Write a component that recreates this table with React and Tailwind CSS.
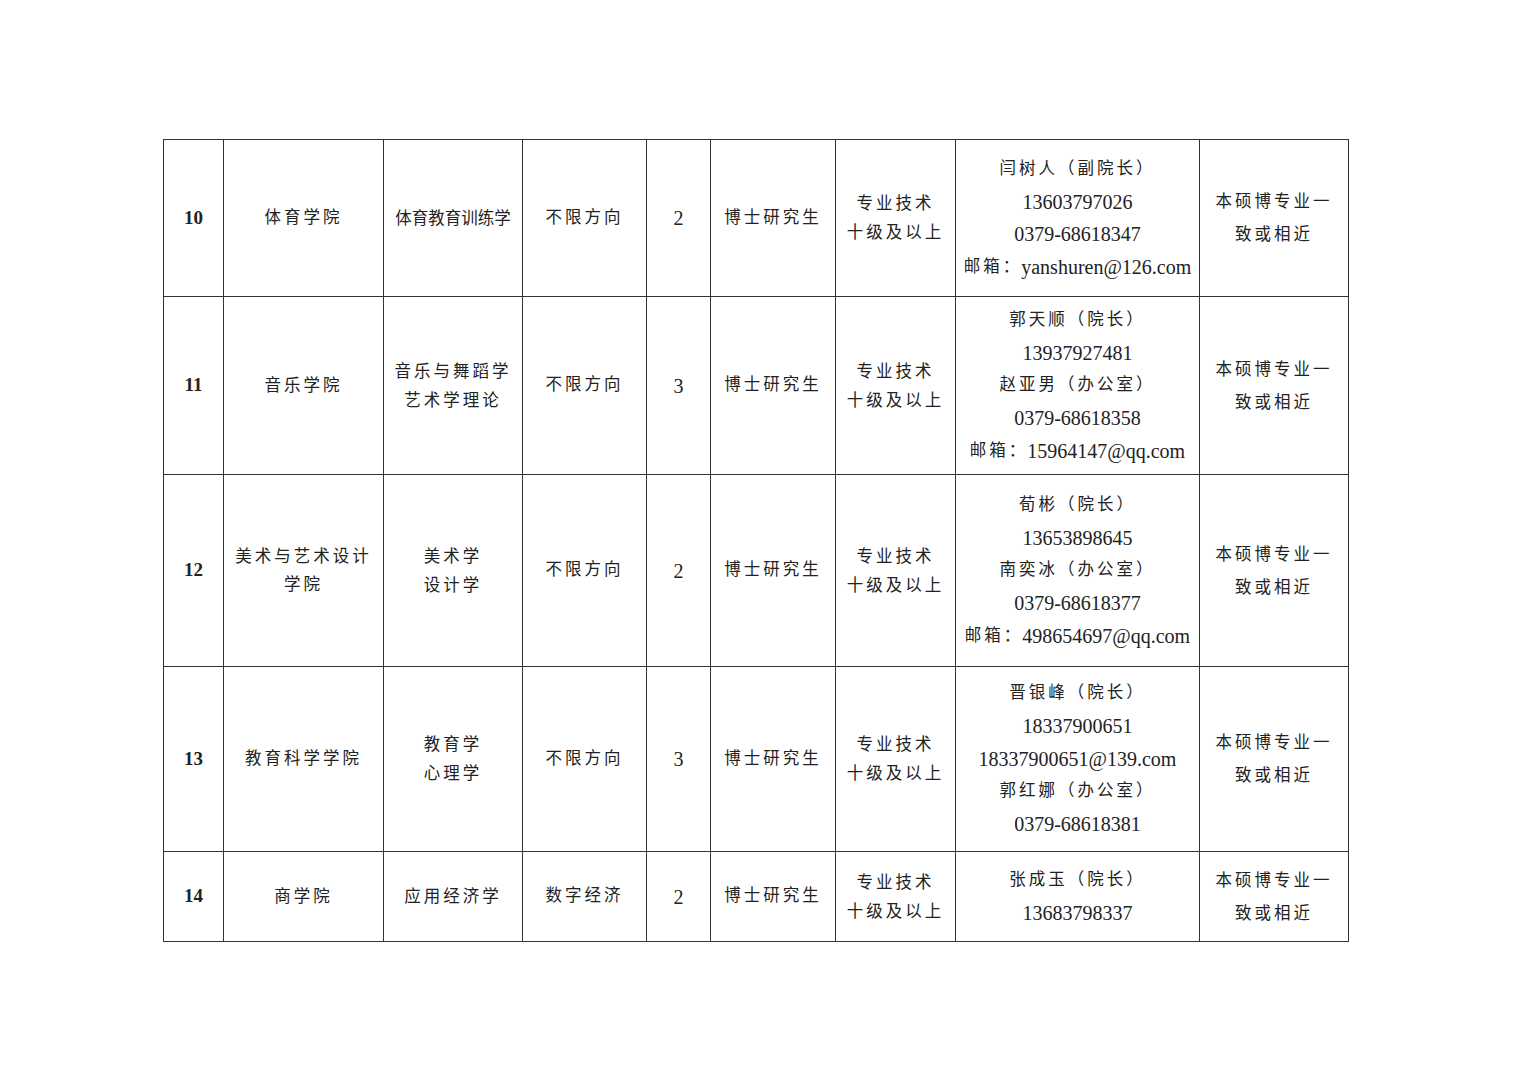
import React from "react";

// column widths in px, summing to 1185
const cols = [60, 160, 139, 124, 64, 125, 120, 244, 149];

const rows = [
  {
    no: "10",
    h: 157,
    dept: ["体育学院"],
    major: ["体育教育训练学"],
    majorTight: true,
    dir: "不限方向",
    num: "2",
    contact: [["闫树人（副院长）"], ["", "13603797026"], ["", "0379-68618347"], ["邮箱", "yanshuren@126.com"]],
  },
  {
    no: "11",
    h: 178,
    dept: ["音乐学院"],
    major: ["音乐与舞蹈学", "艺术学理论"],
    dir: "不限方向",
    num: "3",
    contact: [["郭天顺（院长）"], ["", "13937927481"], ["赵亚男（办公室）"], ["", "0379-68618358"], ["邮箱", "15964147@qq.com"]],
  },
  {
    no: "12",
    h: 192,
    dept: ["美术与艺术设计", "学院"],
    major: ["美术学", "设计学"],
    dir: "不限方向",
    num: "2",
    contact: [["荀彬（院长）"], ["", "13653898645"], ["南奕冰（办公室）"], ["", "0379-68618377"], ["邮箱", "498654697@qq.com"]],
  },
  {
    no: "13",
    h: 185,
    dept: ["教育科学学院"],
    major: ["教育学", "心理学"],
    dir: "不限方向",
    num: "3",
    contact: [["晋银峰（院长）"], ["", "18337900651"], ["", "18337900651@139.com"], ["郭红娜（办公室）"], ["", "0379-68618381"]],
  },
  {
    no: "14",
    h: 90,
    dept: ["商学院"],
    major: ["应用经济学"],
    dir: "数字经济",
    num: "2",
    contact: [["张成玉（院长）"], ["", "13683798337"]],
  },
];

const Zh = ({ children, tight }) => (
  <span className={tight ? "text-[16.5px] tracking-[0px]" : "text-[16.5px] tracking-[3px]"}>{children}</span>
);

const Lines = ({ lines, lh, tight }) => (
  <div className="flex flex-col items-center" style={{ lineHeight: lh + "px" }}>
    {lines.map((l, i) => (
      <div key={i} className="whitespace-nowrap">
        <Zh tight={tight}>{l}</Zh>
      </div>
    ))}
  </div>
);

const cell = "border border-[#333] text-center align-middle p-0";

export default function App() {
  return (
    <div className="w-[1527px] h-[1080px] bg-white pt-[139px] pl-[163px] text-[#222] font-['Liberation_Serif','Noto_Sans_CJK_SC',serif]">
      <table className="border-collapse table-fixed border border-[#222]" style={{ width: 1185 }}>
        <colgroup>
          {cols.map((w, i) => (
            <col key={i} style={{ width: w }} />
          ))}
        </colgroup>
        <tbody>
          {rows.map((r) => (
            <tr key={r.no} style={{ height: r.h }}>
              <td className={cell + " font-bold text-[19px]"}>{r.no}</td>
              <td className={cell}>
                <Lines lines={r.dept} lh={28} />
              </td>
              <td className={cell}>
                <Lines lines={r.major} lh={29} tight={r.majorTight} />
              </td>
              <td className={cell}>
                <Zh>{r.dir}</Zh>
              </td>
              <td className={cell + " text-[20px]"}>{r.num}</td>
              <td className={cell}>
                <Zh>博士研究生</Zh>
              </td>
              <td className={cell}>
                <Lines lines={["专业技术", "十级及以上"]} lh={29} />
              </td>
              <td className={cell}>
                <div className="flex flex-col items-center">
                  {r.contact.map((c, i) => (
                    <div key={i} className="whitespace-nowrap h-[32.7px] flex items-center">
                      {c[0] && <Zh>{c[0]}</Zh>}
                      {c[0] && c[1] && <span className="text-[16.5px] pr-[2px]">：</span>}
                      {c[1] && <span className="text-[20px]">{c[1]}</span>}
                    </div>
                  ))}
                </div>
              </td>
              <td className={cell}>
                <div className="flex flex-col items-center leading-[33px]">
                  <div><Zh>本硕博专业一</Zh></div>
                  <div><Zh>致或相近</Zh></div>
                </div>
              </td>
            </tr>
          ))}
        </tbody>
      </table>
    </div>
  );
}
